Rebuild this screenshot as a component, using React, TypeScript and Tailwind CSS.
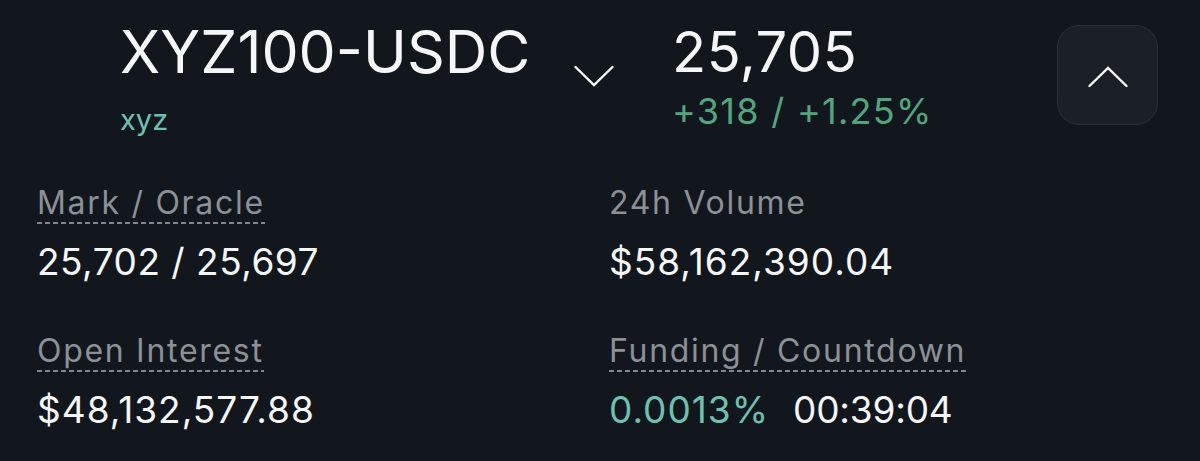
import React from 'react';

const dashes =
  'h-[2px] bg-[repeating-linear-gradient(to_right,#80868c_0px,#80868c_5px,transparent_5px,transparent_8px)]';

function Label({ text, dashed = true }: { text: string; dashed?: boolean }) {
  return (
    <div className="flex flex-col items-start">
      <span className="text-[32px] leading-none tracking-[1.7px] text-[#8b9196]">{text}</span>
      <span className={`mt-[3px] w-full ${dashed ? dashes : 'h-[2px]'}`} />
    </div>
  );
}

function Stat({ label, dashed, children }: { label: string; dashed?: boolean; children: React.ReactNode }) {
  return (
    <div className="flex flex-col items-start">
      <Label text={label} dashed={dashed} />
      <div className="mt-[19px] text-[37px] leading-none">{children}</div>
    </div>
  );
}

export default function App() {
  return (
    <div className="w-[1200px] h-[461px] overflow-hidden bg-[#12171d] text-[#f5f6f7] font-['Inter',sans-serif]">
      {/* Header */}
      <div className="flex items-start pt-[22px]">
        <div className="ml-[120px] w-[454px] flex flex-col">
          <span className="text-[59px] leading-none">XYZ100-USDC</span>
          <span className="mt-[24px] text-[29px] leading-none text-[#6cc1b1]">xyz</span>
        </div>
        <svg className="mt-[43px] w-[40px] h-[22px]" viewBox="0 0 40 22" fill="none">
          <path d="M1.5 2L20 20L38.5 2" stroke="#f5f6f7" strokeWidth="2.4" strokeLinecap="round" />
        </svg>
        <div className="ml-[58px] mt-[2px] flex flex-col">
          <span className="text-[56px] leading-none tracking-[0.5px]">25,705</span>
          <span className="mt-[13px] text-[36px] leading-none tracking-[1.3px] text-[#52a67e]">+318 / +1.25%</span>
        </div>
        <button className="ml-auto mr-[42px] mt-[3px] w-[101px] h-[100px] rounded-[22px] bg-[#1b2027] border border-[#2a3037] flex items-center justify-center">
          <svg className="mt-[4px] w-[40px] h-[22px]" viewBox="0 0 40 22" fill="none">
            <path d="M1.5 20L20 2L38.5 20" stroke="#f5f6f7" strokeWidth="2.4" strokeLinecap="round" />
          </svg>
        </button>
      </div>

      {/* Stats */}
      <div className="grid grid-cols-[572px_1fr] pl-[37px] pt-[53px] gap-y-[55px]">
        <Stat label="Mark / Oracle">
          <span className="tracking-[0.5px]">25,702 / 25,697</span>
        </Stat>
        <Stat label="24h Volume" dashed={false}>
          <span className="tracking-[1px]">$58,162,390.04</span>
        </Stat>
        <Stat label="Open Interest">
          <span className="tracking-[1px]">$48,132,577.88</span>
        </Stat>
        <Stat label="Funding / Countdown">
          <div className="flex gap-[24px]">
            <span className="tracking-[1px] text-[#6cc1b1]">0.0013%</span>
            <span className="tracking-[-0.2px]">00:39:04</span>
          </div>
        </Stat>
      </div>
    </div>
  );
}
